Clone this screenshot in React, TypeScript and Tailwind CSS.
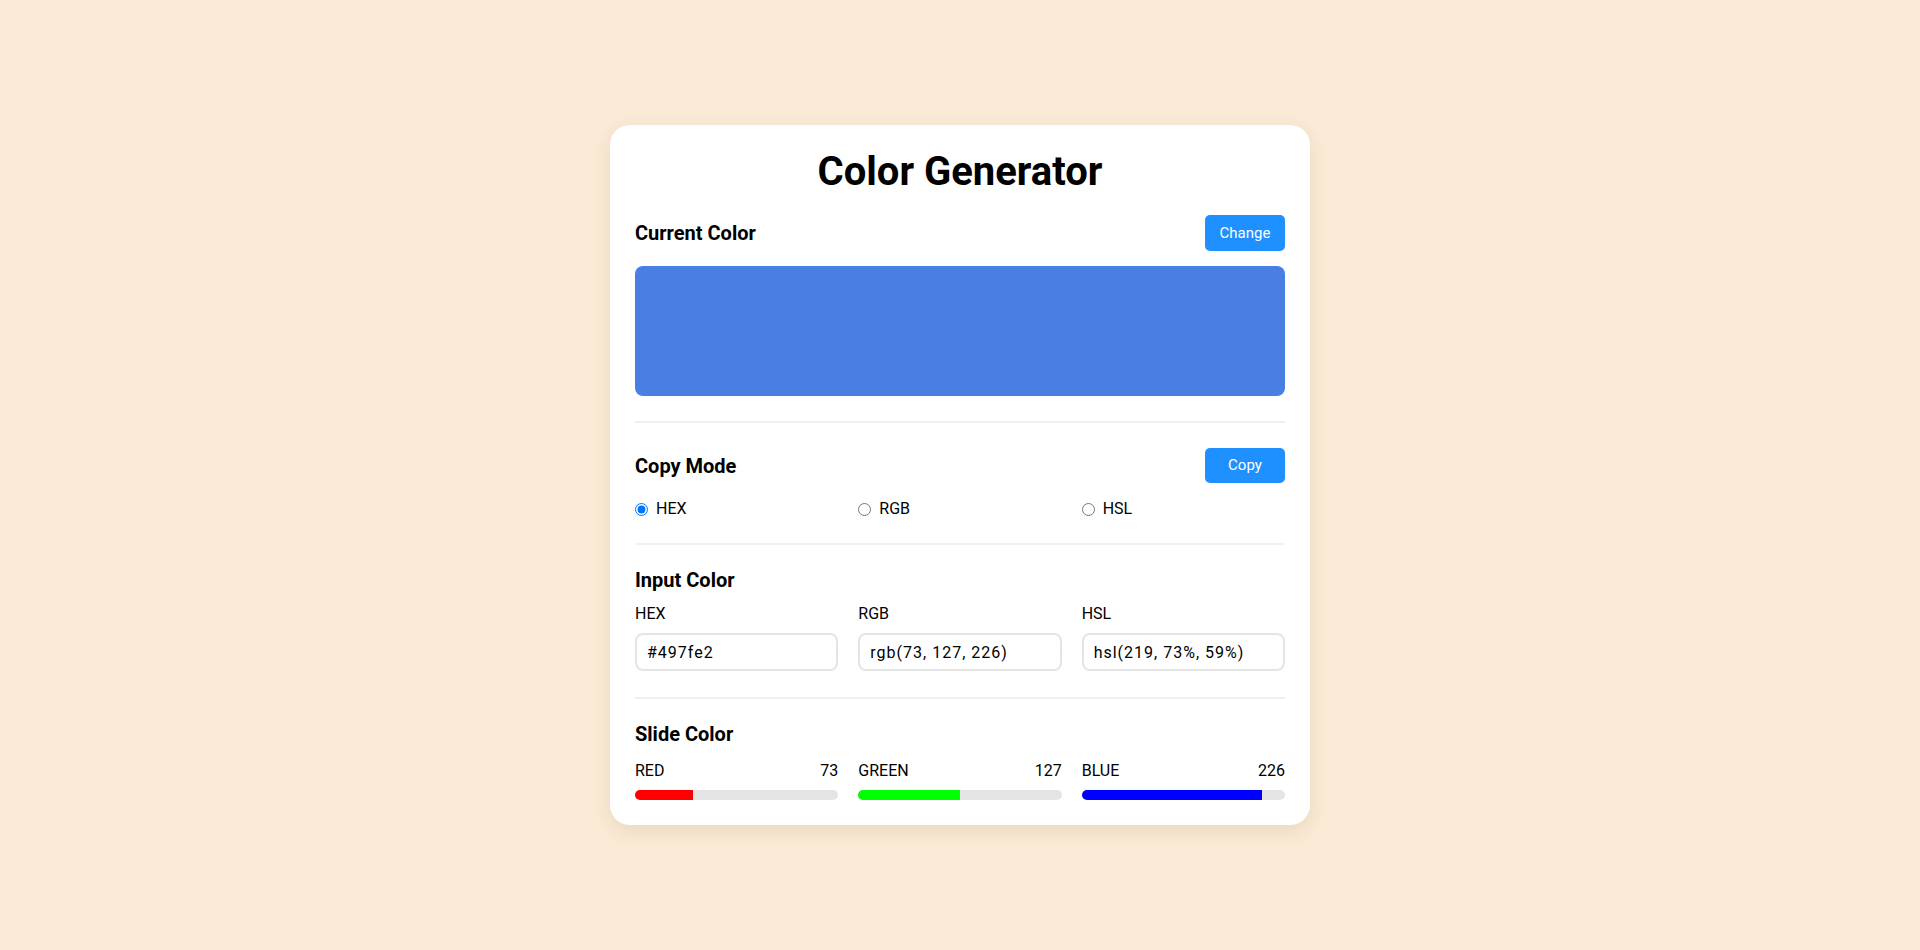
import React from "react";

const font = { fontFamily: "Roboto, 'Noto Sans', sans-serif" };

function Header({ title, button }: { title: string; button?: string }) {
  return (
    <div className="flex h-[36px] items-center justify-between">
      <h2 className="text-[20px] font-bold leading-[22px] text-black">{title}</h2>
      {button && (
        <button className="flex h-[36px] w-[80px] items-center justify-center rounded-[5px] bg-[#1e90ff] text-[15px] leading-none text-white">
          {button}
        </button>
      )}
    </div>
  );
}

function Divider({ mt }: { mt: string }) {
  return <div className={`${mt} h-[2px] w-full bg-[#f0f0f0]`} />;
}

const sliders = [
  { name: "RED", value: 73, color: "bg-[#ff0000]" },
  { name: "GREEN", value: 127, color: "bg-[#00ff00]" },
  { name: "BLUE", value: 226, color: "bg-[#0000ff]" },
];

export default function App() {
  return (
    <div className="flex h-screen w-full items-center justify-center bg-[#faebd7]" style={font}>
      <div className="w-[700px] rounded-[20px] bg-white px-[25px] pb-[25px] pt-[23px] shadow-[0_6px_20px_rgba(160,120,70,0.18)]">
        <h1 className="text-center text-[40px] font-bold leading-[48px] text-black">Color Generator</h1>

        <div className="mt-[19px]">
          <Header title="Current Color" button="Change" />
        </div>
        <div className="mt-[15px] h-[130px] w-full rounded-[8px] bg-[#497fe2]" />

        <Divider mt="mt-[25px]" />

        <div className="mt-[25px]">
          <div className="flex h-[35px] items-center justify-between">
            <h2 className="text-[20px] font-bold leading-[22px] text-black">Copy Mode</h2>
            <button className="flex h-[35px] w-[80px] items-center justify-center rounded-[5px] bg-[#1e90ff] text-[15px] leading-none text-white">
              Copy
            </button>
          </div>
        </div>
        <div className="mt-[16px] grid h-[20px] grid-cols-3 gap-5">
          {["HEX", "RGB", "HSL"].map((m, i) => (
            <label key={m} className="flex items-center gap-2 text-[16px] leading-[20px] text-black">
              <input type="radio" name="mode" defaultChecked={i === 0} className="m-0 h-[13px] w-[13px]" />
              {m}
            </label>
          ))}
        </div>

        <Divider mt="mt-[24px]" />

        <h2 className="mt-[24px] text-[20px] font-bold leading-[22px] text-black">Input Color</h2>
        <div className="mt-[13px] grid grid-cols-3 gap-5">
          {[
            ["HEX", "#497fe2"],
            ["RGB", "rgb(73, 127, 226)"],
            ["HSL", "hsl(219, 73%, 59%)"],
          ].map(([l, v]) => (
            <div key={l} className="flex flex-col">
              <span className="text-[16px] leading-[20px] text-black">{l}</span>
              <input
                readOnly
                value={v}
                className="mt-[9px] h-[38px] w-full rounded-[8px] border-2 border-[#e5e5e5] px-[10px] text-[16px] tracking-[1px] text-black outline-none"
                style={font}
              />
            </div>
          ))}
        </div>

        <Divider mt="mt-[26px]" />

        <h2 className="mt-[24px] text-[20px] font-bold leading-[22px] text-black">Slide Color</h2>
        <div className="mt-[16px] grid grid-cols-3 gap-5">
          {sliders.map((s) => (
            <div key={s.name} className="flex flex-col">
              <div className="flex items-center justify-between text-[16px] leading-[20px] text-black">
                <span>{s.name}</span>
                <span>{s.value}</span>
              </div>
              <div className="mt-[9px] h-[10px] w-full overflow-hidden rounded-full bg-[#e5e5e5]">
                <div className={`h-full ${s.color}`} style={{ width: `${(s.value / 255) * 100}%` }} />
              </div>
            </div>
          ))}
        </div>
      </div>
    </div>
  );
}
